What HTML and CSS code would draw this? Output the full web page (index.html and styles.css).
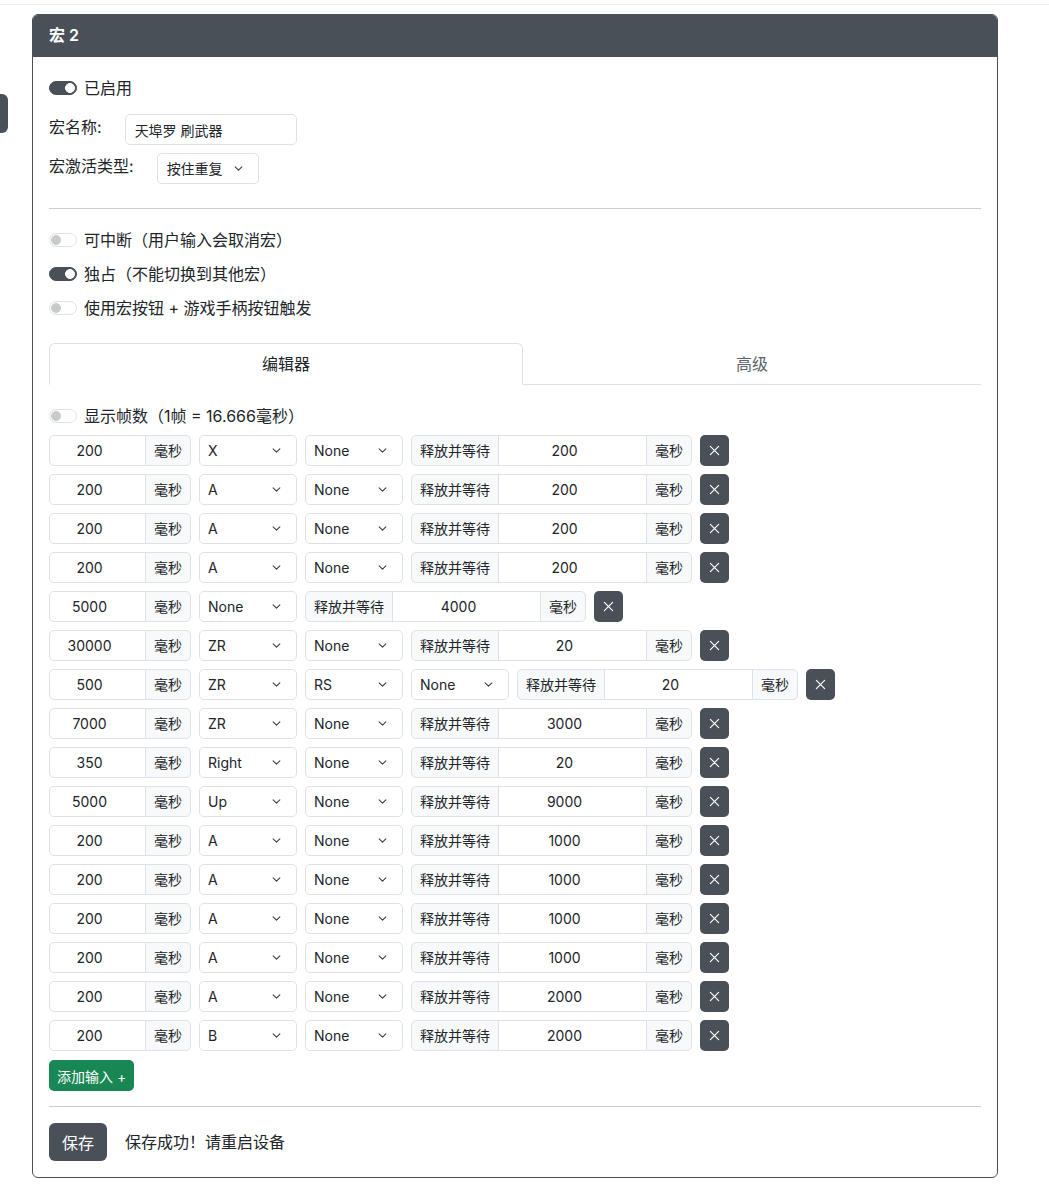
FILE: index.html
```html
<!DOCTYPE html>
<html lang="zh-CN">
<head>
    <meta charset="UTF-8">
    <title>宏设置</title>
    <link rel="stylesheet" href="styles.css">
</head>
<body>
<div class="topBar"></div>
<a class="sideToggle" href="#"></a>

<div class="macroCard">
    <div class="macroHead">宏 2</div>
    <div class="macroBody">
        <label class="switchRow firstSwitch"><input type="checkbox" class="switch" checked>已启用</label>
        <div class="fieldRow">
            <span class="fieldLabel">宏名称:</span>
            <input type="text" class="textInput nameInput" value="天埠罗 刷武器">
        </div>
        <div class="fieldRow">
            <span class="fieldLabel">宏激活类型:</span>
            <select class="selectBox typeSelect">
                <option selected>按住重复</option>
                <option>按下触发</option>
                <option>切换</option>
            </select>
        </div>

        <hr class="line lineTop">

        <label class="switchRow"><input type="checkbox" class="switch">可中断（用户输入会取消宏）</label>
        <label class="switchRow"><input type="checkbox" class="switch" checked>独占（不能切换到其他宏）</label>
        <label class="switchRow"><input type="checkbox" class="switch">使用宏按钮 + 游戏手柄按钮触发</label>

        <ul class="tabNav">
            <li class="active">编辑器</li>
            <li>高级</li>
        </ul>

        <label class="switchRow frameSwitch"><input type="checkbox" class="switch">显示帧数（1帧 = 16.666毫秒）</label>

        <div class="stepList" id="stepList"></div>

        <button class="btnAdd">添加输入 +</button>

        <hr class="line lineBottom">

        <div class="saveRow">
            <button class="btnSave">保存</button>
            <span class="saveMsg">保存成功！请重启设备</span>
        </div>
    </div>
</div>

<script type="text/javascript">
    //->每一步: 按住时长, 按键列表, 释放后等待时长
    var steps = [
        [200, ["X", "None"], 200],
        [200, ["A", "None"], 200],
        [200, ["A", "None"], 200],
        [200, ["A", "None"], 200],
        [5000, ["None"], 4000],
        [30000, ["ZR", "None"], 20],
        [500, ["ZR", "RS", "None"], 20],
        [7000, ["ZR", "None"], 3000],
        [350, ["Right", "None"], 20],
        [5000, ["Up", "None"], 9000],
        [200, ["A", "None"], 1000],
        [200, ["A", "None"], 1000],
        [200, ["A", "None"], 1000],
        [200, ["A", "None"], 1000],
        [200, ["A", "None"], 2000],
        [200, ["B", "None"], 2000]
    ];
    var keys = ["None", "A", "B", "X", "Y", "L", "R", "ZL", "ZR", "LS", "RS", "Up", "Down", "Left", "Right"];

    function keySelect(cur) {
        var html = '<select class="selectBox keySelect">';
        for (var i = 0; i < keys.length; i++) {
            html += '<option' + (keys[i] === cur ? ' selected' : '') + '>' + keys[i] + '</option>';
        }
        return html + '</select>';
    }

    var list = document.getElementById("stepList"), html = "";
    for (var i = 0; i < steps.length; i++) {
        var s = steps[i];
        html += '<div class="stepRow">';
        html += '<div class="inputGroup"><input type="number" class="numInput holdInput" value="' + s[0] + '"><span class="groupText">毫秒</span></div>';
        for (var k = 0; k < s[1].length; k++) {
            html += keySelect(s[1][k]);
        }
        html += '<div class="inputGroup"><span class="groupText">释放并等待</span><input type="number" class="numInput waitInput" value="' + s[2] + '"><span class="groupText">毫秒</span></div>';
        html += '<button class="btnDel"><svg width="11" height="11" viewBox="0 0 12 12"><path d="M1.5 1.5l9 9M10.5 1.5l-9 9" stroke="#fff" stroke-width="1.3" stroke-linecap="round"/></svg></button>';
        html += '</div>';
    }
    list.innerHTML = html;
</script>
</body>
</html>
```

FILE: styles.css
```css
* {
    box-sizing: border-box;
}

body {
    margin: 0;
    font-family: Inter, "Noto Sans CJK SC", sans-serif;
    font-size: 16px;
    line-height: 1.5;
    color: #212529;
    background: #fff;
}

input, select, button {
    font-family: inherit;
    color: inherit;
}

.topBar {
    height: 5px;
    border-bottom: 1px solid #eceef0;
}

/* 左侧收起的侧栏按钮 */
.sideToggle {
    position: fixed;
    left: 0;
    top: 94px;
    width: 8px;
    height: 39px;
    background: #495057;
    border-radius: 0 6px 6px 0;
}

.macroCard {
    width: 966px;
    margin: 9px 0 0 32px;
    border: 1px solid #495057;
    border-radius: 6px;
    overflow: hidden;
}

.macroHead {
    height: 42px;
    padding: 0 16px;
    line-height: 41px;
    background: #495057;
    color: #fff;
    font-weight: 600;
}

.macroBody {
    padding: 19px 16px 16px;
}

/* 开关 */
.switchRow {
    display: flex;
    align-items: center;
    gap: 7px;
    height: 24px;
    margin-bottom: 10px;
}

.firstSwitch {
    margin-bottom: 14px;
}

.switch {
    appearance: none;
    -webkit-appearance: none;
    margin: 0;
    width: 28px;
    height: 14px;
    border: 1px solid #dee2e6;
    border-radius: 7px;
    background: radial-gradient(circle at 6px 50%, #c9cacb 4.6px, transparent 5.2px) #fff;
    flex-shrink: 0;
}

.switch:checked {
    border-color: #495057;
    background: radial-gradient(circle at 20px 50%, #fff 4.6px, transparent 5.2px) #495057;
}

.fieldRow {
    display: flex;
    align-items: center;
    height: 31px;
    margin-bottom: 8px;
}

.fieldLabel {
    margin-right: 23px;
    position: relative;
    top: -3px;
}

.textInput, .selectBox, .numInput {
    height: 31px;
    padding: 0 8px;
    font-size: 14px;
    border: 1px solid #dee2e6;
    border-radius: 5px;
    background-color: #fff;
    outline: none;
}

.nameInput {
    width: 172px;
    padding-left: 9px;
}

.selectBox {
    appearance: none;
    -webkit-appearance: none;
    padding-right: 32px;
    background-image: url("data:image/svg+xml,%3csvg xmlns='http://www.w3.org/2000/svg' viewBox='0 0 16 16'%3e%3cpath fill='none' stroke='%23343a40' stroke-linecap='round' stroke-linejoin='round' stroke-width='1.8' d='m2 5 6 6 6-6'/%3e%3c/svg%3e");
    background-repeat: no-repeat;
    background-position: right 13px center;
    background-size: 13px 9px;
}

.typeSelect {
    width: 102px;
    padding-left: 9px;
}

.line {
    border: 0;
    border-top: 1px solid #cbcdcf;
    margin: 0;
}

.lineTop {
    margin: 24px 0 19px;
}

.lineBottom {
    margin: 15px 0 16px;
}

/* 页卡 */
.tabNav {
    display: flex;
    list-style: none;
    margin: 23px 0 0;
    padding: 0;
    border-bottom: 1px solid #dee2e6;
}

.tabNav li {
    flex: 1 1 auto;
    text-align: center;
    padding: 8px 16px;
    margin-bottom: -1px;
    border: 1px solid transparent;
    border-radius: 6px 6px 0 0;
    color: #5c636a;
    cursor: pointer;
}

.tabNav li.active {
    color: #212529;
    background: #fff;
    border-color: #dee2e6 #dee2e6 #fff;
}

.frameSwitch {
    margin: 19px 0 7px;
}

/* 宏步骤 */
.stepList {
    display: flex;
    flex-direction: column;
    gap: 8px;
}

.stepRow {
    display: flex;
    gap: 8px;
}

.inputGroup {
    display: flex;
}

.inputGroup > * {
    border-radius: 0;
}

.inputGroup > * + * {
    margin-left: -1px;
}

.inputGroup > :first-child {
    border-radius: 5px 0 0 5px;
}

.inputGroup > :last-child {
    border-radius: 0 5px 5px 0;
}

.groupText {
    display: flex;
    align-items: center;
    justify-content: center;
    height: 31px;
    padding: 0 8px;
    font-size: 14px;
    background: #f8f9fa;
    border: 1px solid #dee2e6;
    white-space: nowrap;
}

.numInput {
    text-align: center;
    padding-right: 24px;
    -moz-appearance: textfield;
}

.numInput::-webkit-inner-spin-button,
.numInput::-webkit-outer-spin-button {
    -webkit-appearance: none;
    margin: 0;
}

.holdInput {
    width: 97px;
}

.waitInput {
    width: 149px;
}

.inputGroup .groupText:last-child {
    width: 46px;
}

.keySelect {
    width: 98px;
}

.btnDel {
    width: 29px;
    height: 31px;
    padding: 0;
    border: 0;
    border-radius: 5px;
    background: #495057;
    display: flex;
    align-items: center;
    justify-content: center;
    cursor: pointer;
}

.btnAdd {
    display: block;
    margin-top: 9px;
    height: 31px;
    padding: 0 8px;
    font-size: 14px;
    color: #fff;
    background: #198754;
    border: 0;
    border-radius: 5px;
    cursor: pointer;
}

.saveRow {
    display: flex;
    align-items: center;
    gap: 18px;
}

.btnSave {
    width: 58px;
    height: 38px;
    font-size: 16px;
    color: #fff;
    background: #495057;
    border: 0;
    border-radius: 6px;
    cursor: pointer;
}
```
